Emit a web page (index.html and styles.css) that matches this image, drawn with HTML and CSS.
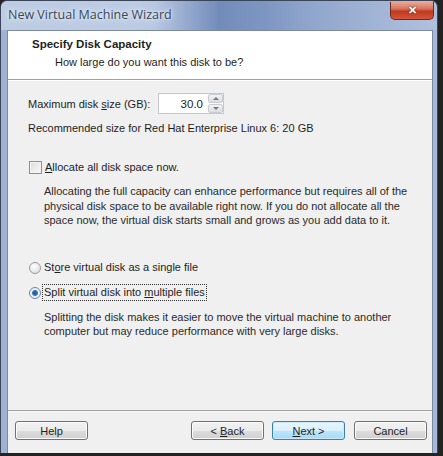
FILE: index.html
```html
<html>
<head>
    <title>New Virtual Machine Wizard</title>
    <meta charset="UTF-8">
    <link rel="stylesheet" href="styles.css">
</head>
<body>

<div class="window">
    <div class="titlebar">
        <span class="title">New Virtual Machine Wizard</span>
        <span class="close">&#x2715;</span>
    </div>

    <div class="client">
        <div class="header">
            <div class="heading">Specify Disk Capacity</div>
            <div class="subheading">How large do you want this disk to be?</div>
        </div>

        <div class="content">
            <div class="size-row">
                <span class="label">Maximum disk <u>s</u>ize (GB):</span>
                <div class="spin">
                    <span class="spin-value">30.0</span>
                    <div class="spin-buttons">
                        <span class="spin-up"></span>
                        <span class="spin-down"></span>
                    </div>
                </div>
            </div>
            <div class="recommend">Recommended size for Red Hat Enterprise Linux 6: 20 GB</div>

            <div class="option check-row">
                <span class="checkbox"></span>
                <span><u>A</u>llocate all disk space now.</span>
            </div>
            <p class="note">Allocating the full capacity can enhance performance but requires all of the<br>
            physical disk space to be available right now. If you do not allocate all the<br>
            space now, the virtual disk starts small and grows as you add data to it.</p>

            <div class="option radio-row first">
                <span class="radio"></span>
                <span>St<u>o</u>re virtual disk as a single file</span>
            </div>
            <div class="option radio-row">
                <span class="radio on"></span>
                <span class="focus">Split virtual disk into <u>m</u>ultiple files</span>
            </div>
            <p class="note">Splitting the disk makes it easier to move the virtual machine to another<br>
            computer but may reduce performance with very large disks.</p>
        </div>

        <div class="footer">
            <button class="btn">Help</button>
            <span class="spacer"></span>
            <button class="btn">&lt; <u>B</u>ack</button>
            <button class="btn default"><u>N</u>ext &gt;</button>
            <button class="btn">Cancel</button>
        </div>
    </div>
</div>

</body>
</html>
```

FILE: styles.css
```css
body {
    margin: 0;
    background: #232323;
    font-family: "Liberation Sans", Arial, sans-serif;
    font-size: 11px;
    color: #1e1e1e;
}
.window {
    width: 438px;
    height: 453px;
    display: flex;
    flex-direction: column;
    background: linear-gradient(to right, #9fb2d2 0%, #aebfdc 30%, #93a9cf 60%, #a7b9d8 100%);
    border-radius: 7px 7px 0 0;
    box-sizing: border-box;
    border: 1px solid #3a4658;
    border-bottom: none;
}
.titlebar {
    height: 29px;
    display: flex;
    align-items: flex-start;
    justify-content: space-between;
    background: linear-gradient(to right, rgba(210,222,238,0.6) 0%, rgba(200,214,235,0.5) 35%, rgba(80,110,165,0.55) 50%, rgba(120,145,190,0.3) 70%, rgba(190,205,228,0.4) 100%);
    border-radius: 6px 6px 0 0;
}
.title {
    margin: 5px 0 0 7px;
    font-family: "Open Sans", sans-serif;
    font-size: 12.5px;
    color: #37465a;
    text-shadow: 0 0 6px #eef3fa, 0 0 3px #eef3fa;
}
.close {
    width: 44px;
    height: 18px;
    margin: 1px 3px 0 0;
    box-sizing: border-box;
    border: 1px solid #6e2a1e;
    border-top: none;
    border-radius: 0 0 5px 5px;
    background: linear-gradient(#e9a897 0%, #d8735c 40%, #c13a1f 55%, #d4553a 100%);
    color: #fff;
    font-size: 11px;
    font-weight: bold;
    text-align: center;
    line-height: 17px;
    text-shadow: 0 0 2px #5a1a10;
}
.client {
    margin: 0 4px 0 6px;
    border: 1px solid #7b8aa2;
    border-bottom: none;
    flex: 1;
    display: flex;
    flex-direction: column;
    background: #f0f0f0;
}
.header {
    height: 49px;
    background: #fff;
    border-bottom: 1px solid #a0a0a0;
    box-sizing: border-box;
    padding: 6px 0 0 24px;
}
.heading {
    font-weight: bold;
    font-size: 11.5px;
    line-height: 15px;
}
.subheading {
    margin: 3px 0 0 23px;
    line-height: 15px;
}
.content {
    height: 331px;
    border-top: 1px solid #fff;
    border-bottom: 1px solid #a0a0a0;
    box-sizing: border-box;
    padding: 0 0 0 20px;
}
.size-row {
    display: flex;
    align-items: center;
    margin-top: 12px;
}
.label {
    width: 130px;
}
.spin {
    width: 66px;
    height: 21px;
    box-sizing: border-box;
    border: 1px solid #c4c8d0;
    background: #fff;
    display: flex;
    align-items: center;
    justify-content: flex-end;
}
.spin-value {
    font-size: 11.5px;
    margin-right: 5px;
}
.spin-buttons {
    width: 15px;
    height: 19px;
    display: flex;
    flex-direction: column;
    gap: 1px;
}
.spin-up, .spin-down {
    flex: 1;
    background: linear-gradient(#f4f4f4, #dcdcdc);
    border: 1px solid #c9ccd2;
    border-radius: 2px;
    position: relative;
}
.spin-up::after, .spin-down::after {
    content: "";
    position: absolute;
    left: 4px;
    top: 2px;
    border-left: 3px solid transparent;
    border-right: 3px solid transparent;
}
.spin-up::after {
    border-bottom: 3px solid #6a7a90;
}
.spin-down::after {
    border-top: 3px solid #6a7a90;
}
.recommend {
    margin-top: 7px;
    line-height: 15px;
}
.option {
    display: flex;
    align-items: center;
    line-height: 15px;
}
.check-row {
    margin-top: 24px;
}
.checkbox {
    width: 13px;
    height: 13px;
    box-sizing: border-box;
    border: 1px solid #8f8f8f;
    background: linear-gradient(135deg, #dcdcdc, #fbfbfb);
    box-shadow: inset 0 0 0 1px #f4f4f4;
    margin: 0 3px 0 1px;
}
.note {
    margin: 9px 0 0 16px;
    line-height: 14.5px;
    color: #2a2a2a;
    white-space: nowrap;
}
.radio-row {
    margin-top: 9px;
    height: 16px;
}
.radio-row.first {
    margin-top: 32px;
}
.radio {
    width: 12px;
    height: 12px;
    box-sizing: border-box;
    border: 1px solid #9a9a9a;
    border-radius: 50%;
    background: radial-gradient(circle at 40% 35%, #ffffff, #d8d8d8);
    margin: 0 3px 0 1px;
}
.radio.on {
    border-color: #6d87a8;
    background: radial-gradient(circle, #1b4e8c 0, #3d79b8 2.5px, #e6eef6 3.5px, #f4f6f8 6px);
}
.focus {
    border: 1px dotted #333;
    padding: 0 1px;
    margin-left: -2px;
}
.footer {
    flex: 1;
    border-top: 1px solid #f8f8f8;
    display: flex;
    align-items: flex-start;
    gap: 8px;
    padding: 9px 5px 0 7px;
}
.spacer {
    flex: 1;
}
.btn {
    width: 73px;
    height: 19px;
    font-family: "Liberation Sans", Arial, sans-serif;
    font-size: 11px;
    color: #1e1e1e;
    border: 1px solid #707070;
    border-radius: 3px;
    background: linear-gradient(#f2f2f2 0%, #ebebeb 50%, #dddddd 51%, #cfcfcf 100%);
    box-shadow: inset 0 0 0 1px #fcfcfc;
    padding: 0;
}
.btn.default {
    border-color: #3c7fb1;
    background: linear-gradient(#eaf6fd 0%, #d9f0fc 50%, #bee6fd 51%, #a7d9f5 100%);
    box-shadow: inset 0 0 0 1px #c8e9fb;
    margin-right: 1px;
}
```
